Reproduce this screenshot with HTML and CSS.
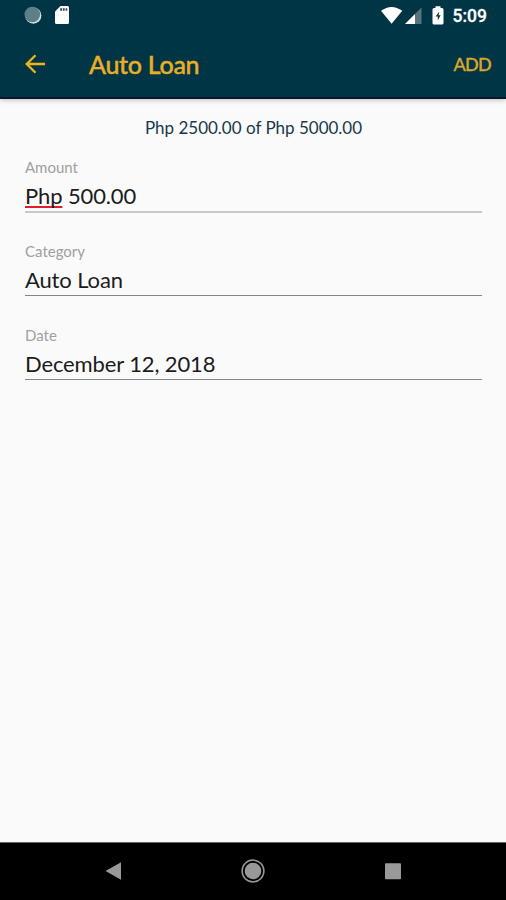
FILE: index.html
```
<!DOCTYPE html>
<html lang="en">
<head>
    <meta charset="UTF-8">
    <meta name="viewport" content="width=device-width, initial-scale=1.0">
    <title>Auto Loan</title>
    <link rel="stylesheet" href="styles.css">
</head>
<body>
    <header class="header">
        <div class="status-bar">
            <svg class="status-icon sync" width="20" height="20" viewBox="0 0 20 20">
                <circle cx="10.3" cy="9.6" r="8.1" fill="#d3dfe1"/>
                <circle cx="9.3" cy="8.500" r="7.800" fill="#5d7f88"/>
            </svg>
            <svg class="status-icon sd-card" width="16" height="20" viewBox="0 0 16 20">
                <path d="M5.500 0H12.500Q14 0 14 1.500V16.500Q14 18 12.500 18H1.500Q0 18 0 16.500V5.500Z" fill="#fff"/>
                <path d="M5.200 2.300h2v2.500h-2zM8 2.300h1.700v2.500h-1.700zM10.600 2.300h1.700v2.500h-1.700z" fill="#3a4a54"/>
            </svg>
            <div class="status-right">
                <svg width="23" height="20" viewBox="0 0 23 20">
                    <path d="M1 4.800Q11.600 -3 22.300 4.800L11.600 17.800Z" fill="#fff"/>
                </svg>
                <svg class="signal" width="17" height="18" viewBox="0 0 17 18">
                    <path d="M0 17L16.500 .500V17Z" fill="#57747e"/>
                    <path d="M0 17L10 7V17Z" fill="#fff"/>
                </svg>
                <svg class="battery" width="12" height="20" viewBox="0 0 12 20">
                    <path d="M3.500 2V.300h5V2H10Q11.500 2 11.500 3.500V17Q11.500 18.500 10 18.500H2Q.500 18.500 .500 17V3.500Q.500 2 2 2Z" fill="#fff"/>
                    <path d="M7.300 5.500L3.600 10.500H5.800V14.500L8.600 9.200H6.600Z" fill="#18313d"/>
                </svg>
                <span class="clock">5:09</span>
            </div>
        </div>
        <div class="toolbar">
            <svg class="back" width="20" height="20" viewBox="0 0 20 20">
                <path d="M20 10H1.800M10.500 1.200L1.700 10L10.500 18.800" fill="none" stroke="#f3b41b" stroke-width="2.300"/>
            </svg>
            <h1 class="title">Auto Loan</h1>
            <button class="add">ADD</button>
        </div>
    </header>

    <main class="content">
        <p class="summary">Php 2500.00 of Php 5000.00</p>
        <div class="field field-amount">
            <div class="label">Amount</div>
            <div class="value"><span class="misspelled">Php</span> 500.00</div>
        </div>
        <div class="field">
            <div class="label">Category</div>
            <div class="value">Auto Loan</div>
        </div>
        <div class="field">
            <div class="label">Date</div>
            <div class="value">December 12, 2018</div>
        </div>
    </main>

    <nav class="nav-bar">
        <svg width="24" height="24" viewBox="0 0 24 24">
            <path d="M4.500 12L20 3.200V20.800Z" fill="#999"/>
        </svg>
        <svg width="24" height="24" viewBox="0 0 24 24">
            <circle cx="12" cy="12" r="10.900" fill="none" stroke="#999" stroke-width="1.500"/>
            <circle cx="12" cy="12" r="8.300" fill="#999"/>
        </svg>
        <svg width="24" height="24" viewBox="0 0 24 24">
            <rect x="4" y="4.300" width="16" height="16" rx="1" fill="#999"/>
        </svg>
    </nav>
</body>
</html>
```
FILE: styles.css
```
* {
    box-sizing: border-box;
}
body {
    margin: 0;
    height: 900px;
    display: flex;
    flex-direction: column;
    background-color: #fafafa;
    font-family: Lato, sans-serif;
    overflow: hidden;
}
.header {
    height: 99px;
    background-color: #003545;
    border-bottom: 2px solid #0b1730;
    box-shadow: 0 1px 5px rgba(0,0,0,0.25);
}
.status-bar {
    height: 32px;
    display: flex;
    align-items: center;
    padding: 0 19px 0 23px;
}
.sd-card {
    margin-left: 12px;
}
.status-right {
    margin-left: auto;
    display: flex;
    align-items: center;
}
.signal {
    margin-left: 2px;
}
.battery {
    margin-left: 10px;
}
.clock {
    margin-left: 9px;
    font-family: Roboto, sans-serif;
    font-size: 17.5px;
    font-weight: 500;
    line-height: 20px;
    color: #fff;
    -webkit-text-stroke: 0.3px #fff;
}
.toolbar {
    height: 64px;
    display: flex;
    align-items: center;
    padding: 0 15px 0 25px;
    color: #e9af25;
}
.title {
    margin: 0 0 0 44px;
    font-size: 25px;
    font-weight: 500;
    line-height: 30px;
    letter-spacing: -0.3px;
    -webkit-text-stroke: 0.4px #e9af25;
}
.add {
    margin-left: auto;
    padding: 0;
    border: none;
    background: none;
    font-family: inherit;
    font-size: 18px;
    font-weight: 500;
    line-height: 22px;
    letter-spacing: -0.7px;
    color: #d9a72c;
    -webkit-text-stroke: 0.3px #d9a72c;
}
.content {
    flex: 1;
    padding: 18px 24px 0 25px;
}
.summary {
    margin: 0 0 18px;
    font-size: 17px;
    line-height: 22px;
    text-align: center;
    color: #17384a;
}
.field {
    height: 64px;
    margin-bottom: 20px;
    padding-top: 1px;
}
.label {
    font-size: 15px;
    line-height: 18px;
    color: #a0a0a0;
}
.value {
    height: 36px;
    padding-top: 7px;
    font-size: 22px;
    line-height: 26px;
    letter-spacing: -0.13px;
    color: #1c1c1c;
    border-bottom: 1px solid #858585;
}
.field-amount .value {
    height: 37px;
    border-bottom: 2px solid #c8c8c8;
}
.misspelled {
    text-decoration: underline 2px #e02028;
    text-decoration-skip-ink: none;
    text-underline-offset: 2px;
}
.nav-bar {
    height: 58px;
    display: flex;
    align-items: center;
    justify-content: center;
    gap: 116px;
    padding-bottom: 2px;
    background-color: #000;
    border-top: 1px solid #666;
}
```
